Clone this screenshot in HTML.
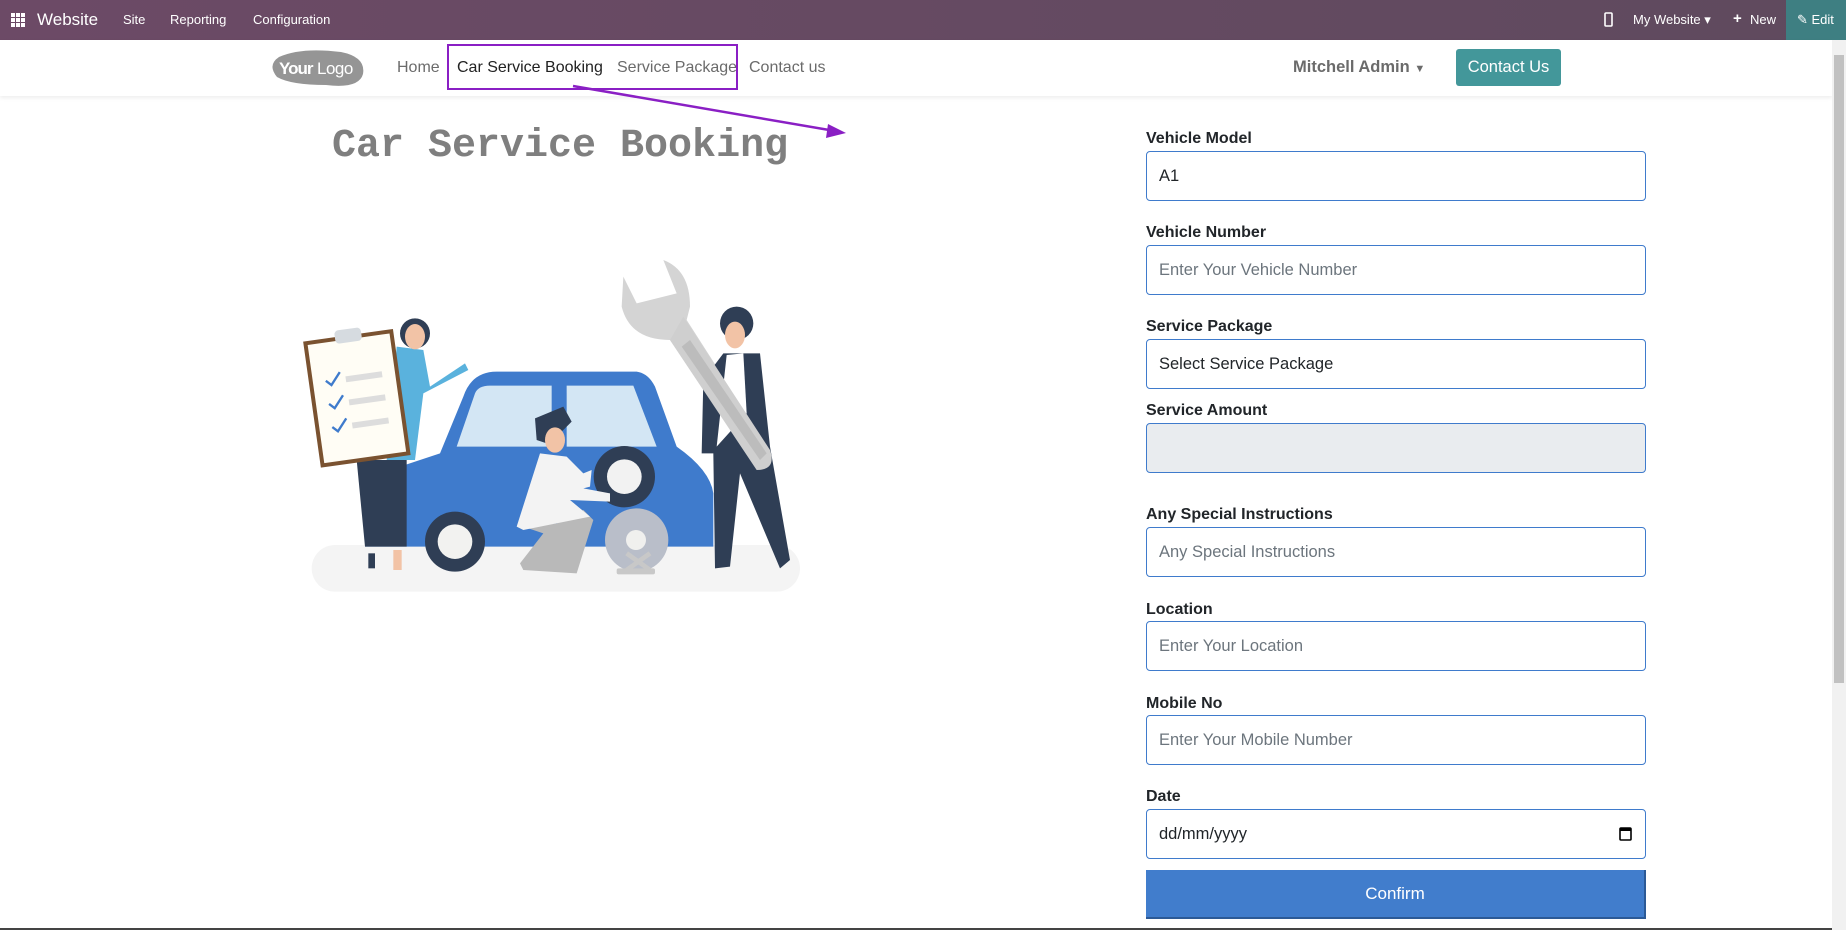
<!DOCTYPE html>
<html><head><meta charset="utf-8"><style>
*{margin:0;padding:0;box-sizing:border-box}
body{width:1846px;height:930px;overflow:hidden;background:#fff;font-family:"Liberation Sans",sans-serif;position:relative}
.a{position:absolute;white-space:nowrap}
#top{left:0;top:0;width:1846px;height:40px;background:linear-gradient(90deg,#6c4a66,#5f4a5e)}
#top .t{color:#fff;font-size:13px;top:12px}
.lbl{position:absolute;left:1146px;font-size:16px;font-weight:bold;color:#212529}
.inp{position:absolute;left:1146px;width:500px;height:50px;border:1px solid #3f7bcc;border-radius:4px;font-size:16.5px;color:#6c757d;padding:15px 12px}
.nav{font-size:16px;color:#6b6b6b;top:59px}
</style></head><body>
<div id="top" class="a">
 <svg class="a" style="left:11px;top:13px" width="14" height="14" viewBox="0 0 14 14" fill="#fff"><rect x="0" y="0" width="4" height="4"/><rect x="5" y="0" width="4" height="4"/><rect x="10" y="0" width="4" height="4"/><rect x="0" y="5" width="4" height="4"/><rect x="5" y="5" width="4" height="4"/><rect x="10" y="5" width="4" height="4"/><rect x="0" y="10" width="4" height="4"/><rect x="5" y="10" width="4" height="4"/><rect x="10" y="10" width="4" height="4"/></svg>
 <div class="a t" style="left:37px;top:10px;font-size:17px">Website</div>
 <div class="a t" style="left:123px">Site</div>
 <div class="a t" style="left:170px">Reporting</div>
 <div class="a t" style="left:253px">Configuration</div>
 <svg class="a" style="left:1604px;top:12px" width="9" height="15" viewBox="0 0 9 15"><rect x="1" y="1" width="7" height="13" rx="1" fill="none" stroke="#fff" stroke-width="1.6"/></svg>
 <div class="a t" style="left:1633px">My Website ▾</div>
 <div class="a t" style="left:1733px;font-weight:bold;font-size:15px;top:10px">+</div>
 <div class="a t" style="left:1750px">New</div>
 <div class="a" style="left:1786px;top:0;width:60px;height:40px;background:#3e7f82"></div>
 <div class="a t" style="left:1797px">✎ Edit</div>
</div>
<div class="a" style="left:0;top:40px;width:1832px;height:56px;background:#fff;box-shadow:0 2px 4px rgba(0,0,0,.07)"></div>
<svg class="a" style="left:271px;top:49px" width="95" height="38" viewBox="0 0 95 38"><path d="M8,8 Q30,-2 70,3 Q95,8 92,25 Q88,40 55,36 Q20,36 6,28 Q-4,16 8,8Z" fill="#959595"/><text x="8" y="25" font-family="Liberation Sans" font-size="17" font-weight="bold" fill="#fff" letter-spacing="-1">Your</text><text x="46" y="25" font-family="Liberation Sans" font-size="17" fill="#fff" letter-spacing="-0.5">Logo</text></svg>
<div class="a nav" style="left:397px">Home</div>
<div class="a nav" style="left:457px;color:#222">Car Service Booking</div>
<div class="a nav" style="left:617px">Service Package</div>
<div class="a nav" style="left:749px">Contact us</div>
<div class="a" style="left:447px;top:44px;width:291px;height:46px;border:2px solid #8a1fc4"></div>
<svg class="a" style="left:0;top:0" width="900" height="150"><line x1="573" y1="86" x2="835" y2="131" stroke="#8a1fc4" stroke-width="2.5"/><polygon points="846,133 828,124 826,138" fill="#8a1fc4"/></svg>
<div class="a" style="left:1293px;top:58px;font-size:16.5px;font-weight:bold;color:#6b6b6b">Mitchell Admin <span style="font-size:11px">▼</span></div>
<div class="a" style="left:1456px;top:49px;width:105px;height:37px;background:#43979a;border-radius:3px;color:#fff;font-size:16.5px;text-align:center;line-height:37px">Contact Us</div>
<div class="a" style="left:332px;top:124px;font-family:'Liberation Mono',monospace;font-size:40px;font-weight:bold;color:#7f7f7f">Car Service Booking</div>
<svg class="a" style="left:260px;top:240px" width="580" height="360" viewBox="0 0 1560 1080">
<rect x="65" y="915" width="1465" height="140" rx="70" fill="#f4f4f4"/>
<path d="M1000,110 L1040,190 L1160,160 L1120,60 Q1200,90 1200,200 L1190,240 L1440,630 Q1460,690 1400,690 L1140,300 Q1020,300 995,200Z" fill="#d4d4d4"/>
<path d="M225,920 L225,780 Q240,700 330,680 L450,640 L520,470 Q545,395 620,395 L1040,395 Q1075,400 1095,440 L1160,620 Q1260,690 1270,760 L1270,920Z" fill="#3f7bcc"/>
<path d="M500,620 L555,460 Q565,437 600,437 L785,437 L785,620Z" fill="#d3e6f4"/>
<path d="M830,437 L1030,437 L1100,620 L830,620Z" fill="#d3e6f4"/>
<circle cx="1040" cy="900" r="95" fill="#b9bec9"/>
<circle cx="495" cy="905" r="90" fill="#2f3e55"/><circle cx="495" cy="905" r="52" fill="#f2f2f0"/>
<path d="M1010,940 L1080,990 M1080,940 L1010,990" stroke="#c8c8c8" stroke-width="14"/><rect x="980" y="985" width="115" height="18" rx="6" fill="#c8c8c8"/><circle cx="1038" cy="900" r="30" fill="#f0f0ee"/>
<path d="M200,660 L350,660 L350,920 L225,920Z" fill="#2f3e55"/>
<path d="M320,320 L400,330 L420,440 L525,370 L535,390 L400,460 L375,660 L290,660Z" fill="#5ab2dd"/>
<circle cx="375" cy="280" r="45" fill="#2f3e55"/><ellipse cx="375" cy="290" rx="30" ry="38" fill="#f2c3a6"/>
<g transform="rotate(-8 200 470)"><rect x="70" y="290" width="260" height="370" fill="#fffdf5" stroke="#7a5230" stroke-width="12"/><rect x="160" y="265" width="80" height="40" rx="12" fill="#d6dbe0"/>
<rect x="175" y="405" width="110" height="18" fill="#ddd"/><rect x="175" y="475" width="110" height="18" fill="#ddd"/><rect x="175" y="545" width="110" height="18" fill="#ddd"/>
<path d="M115,410 L130,425 L160,390 M115,480 L130,495 L160,460 M115,550 L130,565 L160,530" stroke="#3f7bcc" stroke-width="7" fill="none"/></g>
<rect x="235" y="940" width="20" height="45" fill="#2f3e55"/><rect x="310" y="930" width="25" height="60" fill="#f2c3a6"/>
<circle cx="1003" cy="710" r="92" fill="#2f3e55"/><circle cx="1003" cy="710" r="52" fill="#f2f2f2"/>
<path d="M700,860 L760,880 L690,970 L700,990 L860,1000 L910,840 L880,810 L800,850Z" fill="#b9b9b9"/>
<path d="M750,640 L830,650 L880,700 L905,690 L900,740 L880,745 L960,760 L960,785 L840,780 L900,830 L700,870 L680,860Z" fill="#f3f3f3"/>
<path d="M735,535 L820,500 L845,545 L820,570 L770,610 L740,600Z" fill="#2f3e55"/><ellipse cx="795" cy="600" rx="30" ry="38" fill="#f2c3a6"/>
<path d="M1300,340 L1410,340 L1440,620 L1500,960 L1470,985 L1350,700 L1320,980 L1275,985 L1270,640 L1235,640 L1240,420Z" fill="#2f3e55"/>
<path d="M1310,345 L1360,340 L1370,520 L1280,620Z" fill="#fff"/>
<circle cx="1340" cy="250" r="50" fill="#2f3e55"/><ellipse cx="1335" cy="285" rx="30" ry="40" fill="#f2c3a6"/>
<path d="M1180,230 L1440,630 Q1460,690 1400,690 L1140,300Z" fill="#cfcfcf"/><path d="M1175,320 L1410,660 L1430,640 L1200,300Z" fill="#bcbcbc"/>
</svg>
<div class="lbl" style="top:130px">Vehicle Model</div>
<div class="inp" style="top:151px;color:#212529">A1</div>
<div class="lbl" style="top:224px">Vehicle Number</div>
<div class="inp" style="top:245px">Enter Your Vehicle Number</div>
<div class="lbl" style="top:318px">Service Package</div>
<div class="inp" style="top:339px;color:#212529">Select Service Package</div>
<div class="lbl" style="top:402px">Service Amount</div>
<div class="inp" style="top:423px;background:#e9ecef"></div>
<div class="lbl" style="top:506px">Any Special Instructions</div>
<div class="inp" style="top:527px">Any Special Instructions</div>
<div class="lbl" style="top:601px">Location</div>
<div class="inp" style="top:621px">Enter Your Location</div>
<div class="lbl" style="top:695px">Mobile No</div>
<div class="inp" style="top:715px">Enter Your Mobile Number</div>
<div class="lbl" style="top:788px">Date</div>
<div class="inp" style="top:809px;color:#212529">dd/mm/yyyy<svg style="position:absolute;right:13px;top:16px" width="13" height="15" viewBox="0 0 13 15"><rect x="1" y="2" width="11" height="12" rx="1" fill="none" stroke="#000" stroke-width="1.6"/><rect x="1" y="2" width="11" height="3" fill="#000"/></svg></div>
<div class="a" style="left:1146px;top:870px;width:500px;height:49px;background:#417dcc;border-right:2px solid #2c5a96;border-bottom:2px solid #2c5a96;color:#fff;font-size:17px;text-align:center;line-height:47px">Confirm</div>
<div class="a" style="left:1832px;top:40px;width:14px;height:890px;background:#f1f1f1"></div>
<div class="a" style="left:1834px;top:55px;width:10px;height:628px;background:#c1c1c1"></div>
<div class="a" style="left:0;top:928px;width:1832px;height:2px;background:#444"></div>
</body></html>
